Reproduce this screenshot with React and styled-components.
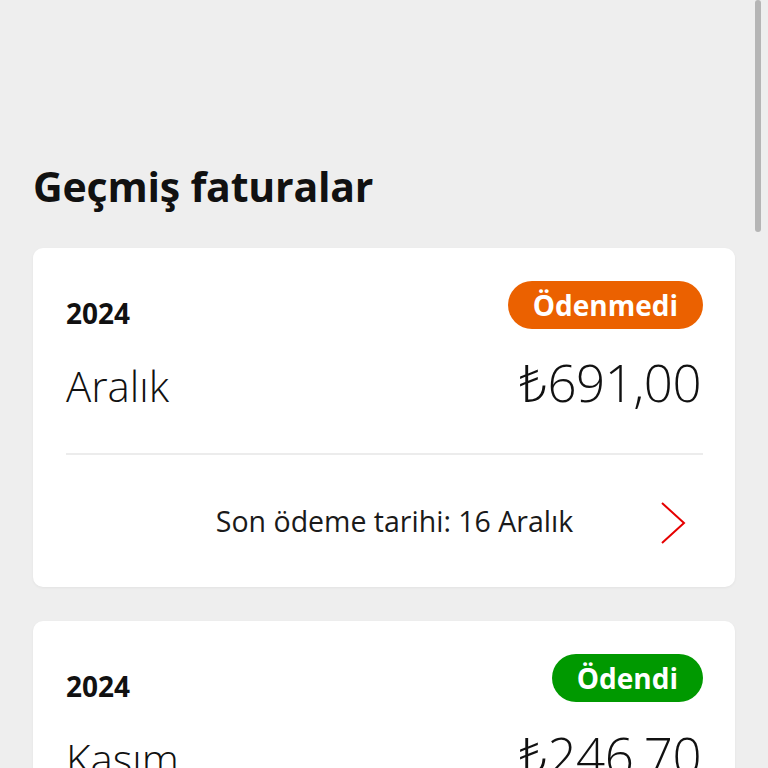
import React from "react";
import styled, { createGlobalStyle } from "styled-components";

const Global = createGlobalStyle`
  html, body { margin: 0; padding: 0; background: #eeeeee; }
  body { font-family: "Open Sans", "Noto Sans", sans-serif; color: #1a1a1a; overflow: hidden; }
`;

const Page = styled.div`
  position: relative;
  width: 768px;
  height: 768px;
  overflow: hidden;
  background: #eeeeee;
  box-sizing: border-box;
  padding: 158px 33px 0 33px;
`;

const ScrollThumb = styled.div`
  position: absolute;
  right: 7px;
  top: 0;
  width: 6px;
  height: 232px;
  border-radius: 3px;
  background: #b5b5b5;
`;

const Title = styled.h1`
  margin: 0 0 34px 0;
  font-size: 41px;
  font-weight: 700;
  line-height: 56px;
  letter-spacing: -0.2px;
  color: #111;
`;

const List = styled.div`
  display: flex;
  flex-direction: column;
  gap: 34px;
`;

const Card = styled.div`
  background: #fff;
  border-radius: 10px;
  padding: 32px 32px 0 33px;
  box-shadow: 0 1px 3px rgba(0, 0, 0, 0.05);
`;

const TopRow = styled.div`
  display: flex;
  justify-content: space-between;
  align-items: center;
  height: 49px;
`;

const Year = styled.div`
  font-size: 28px;
  font-weight: 700;
  margin-top: 16px;
  color: #111;
`;

const Badge = styled.div`
  height: 48px;
  padding: 0 25px;
  border-radius: 24px;
  background: ${(p) => (p.$paid ? "#009900" : "#eb6100")};
  color: #fff;
  font-size: 28px;
  font-weight: 700;
  display: flex;
  align-items: center;
`;

const MainRow = styled.div`
  display: flex;
  justify-content: space-between;
  align-items: baseline;
  margin-top: 18px;
  height: 60px;
`;

const Month = styled.div`
  font-size: 42px;
  font-weight: 300;
  color: #111;
`;

const Amount = styled.div`
  font-size: 51px;
  font-weight: 300;
  color: #111;
  margin-right: 2px;
  letter-spacing: -0.5px;
`;

const Divider = styled.div`
  height: 2px;
  background: #ececec;
  margin-top: 46px;
`;

const Footer = styled.div`
  display: flex;
  align-items: center;
  justify-content: center;
  height: 132px;
  position: relative;
`;

const DueText = styled.div`
  font-size: 28.5px;
  font-weight: 400;
  color: #1a1a1a;
  margin-left: 20px;
`;

const Chevron = styled.svg`
  position: absolute;
  right: 16px;
  top: 44px;
`;

const bills = [
  { year: "2024", month: "Aralık", amount: "₺691,00", paid: false, due: "Son ödeme tarihi: 16 Aralık" },
  { year: "2024", month: "Kasım", amount: "₺246,70", paid: true, due: "Ödeme tarihi: 16 Kasım" },
];

export default function App() {
  return (
    <>
      <Global />
      <Page>
        <ScrollThumb />
        <Title>Geçmiş faturalar</Title>
        <List>
          {bills.map((b, i) => (
            <Card key={i}>
              <TopRow>
                <Year>{b.year}</Year>
                <Badge $paid={b.paid}>{b.paid ? "Ödendi" : "Ödenmedi"}</Badge>
              </TopRow>
              <MainRow>
                <Month>{b.month}</Month>
                <Amount>{b.amount}</Amount>
              </MainRow>
              <Divider />
              <Footer>
                <DueText>{b.due}</DueText>
                <Chevron width="28" height="48" viewBox="0 0 28 48">
                  <path d="M3 4 L25 24 L3 44" fill="none" stroke="#e60000" strokeWidth="2" />
                </Chevron>
              </Footer>
            </Card>
          ))}
        </List>
      </Page>
    </>
  );
}
